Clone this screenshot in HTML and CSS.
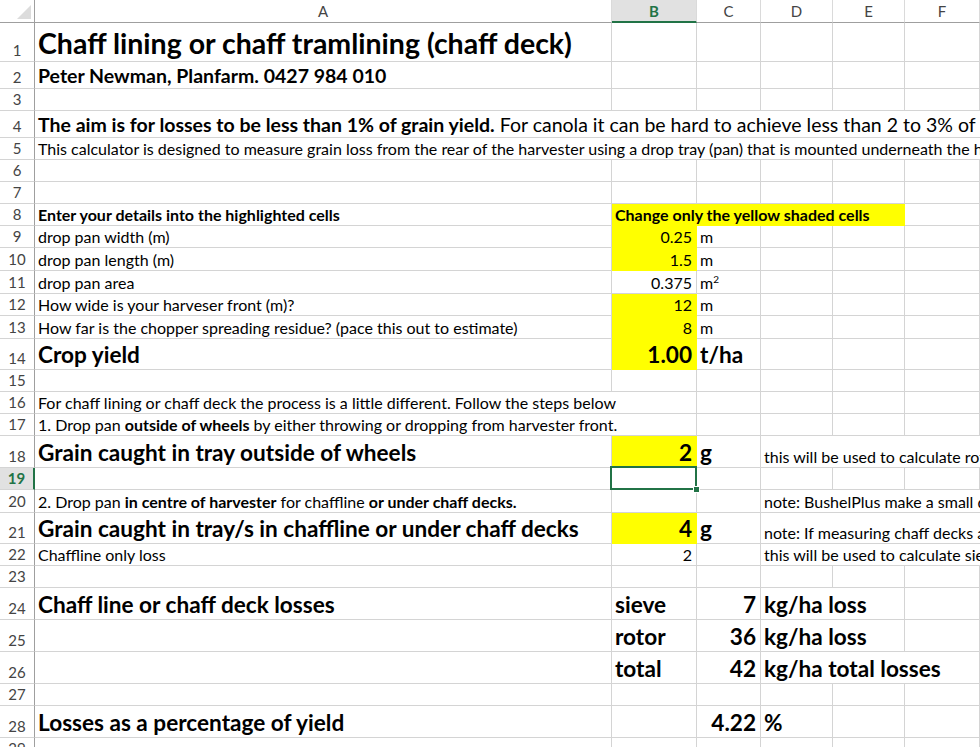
FILE: index.html
```html
<!DOCTYPE html>
<html lang="en">
<head>
  <meta charset="UTF-8" />
  <title>Chaff deck losses</title>
  <link rel="stylesheet" href="styles.css">
</head>
<body>
<div class="sheet">

  <div class="row head">
    <div class="corner">
      <svg width="34" height="22" viewBox="0 0 34 22"><polygon points="31,5 31,19 17,19" fill="#dcdcdc"/></svg>
    </div>
    <div class="col">A</div>
    <div class="col on">B</div>
    <div class="col">C</div>
    <div class="col">D</div>
    <div class="col">E</div>
    <div class="col">F</div>
    <div class="col">G</div>
  </div>

  <div class="row h39">
    <div class="rn">1</div>
    <div class="cell title">Chaff lining or chaff tramlining (chaff deck)</div>
    <div class="cell"></div><div class="cell"></div><div class="cell"></div><div class="cell"></div><div class="cell"></div><div class="cell"></div>
  </div>

  <div class="row h27">
    <div class="rn">2</div>
    <div class="cell sub">Peter Newman, Planfarm. 0427 984 010</div>
    <div class="cell"></div><div class="cell"></div><div class="cell"></div><div class="cell"></div><div class="cell"></div><div class="cell"></div>
  </div>

  <div class="row">
    <div class="rn">3</div>
    <div class="cell"></div><div class="cell"></div><div class="cell"></div><div class="cell"></div><div class="cell"></div><div class="cell"></div><div class="cell"></div>
  </div>

  <div class="row h27">
    <div class="rn">4</div>
    <div class="cell s7 mid"><span><b>The aim is for losses to be less than 1% of grain yield.</b> For canola it can be hard to achieve less than 2 to 3% of grain yield.</span></div>
  </div>

  <div class="row">
    <div class="rn">5</div>
    <div class="cell s7">This calculator is designed to measure grain loss from the rear of the harvester using a drop tray (pan) that is mounted underneath the harvester.</div>
  </div>

  <div class="row">
    <div class="rn">6</div>
    <div class="cell"></div><div class="cell"></div><div class="cell"></div><div class="cell"></div><div class="cell"></div><div class="cell"></div><div class="cell"></div>
  </div>

  <div class="row">
    <div class="rn">7</div>
    <div class="cell"></div><div class="cell"></div><div class="cell"></div><div class="cell"></div><div class="cell"></div><div class="cell"></div><div class="cell"></div>
  </div>

  <div class="row">
    <div class="rn">8</div>
    <div class="cell bold">Enter your details into the highlighted cells</div>
    <div class="cell s4 y bold">Change only the yellow shaded cells</div>
    <div class="cell"></div><div class="cell"></div>
  </div>

  <div class="row">
    <div class="rn">9</div>
    <div class="cell">drop pan width (m)</div>
    <div class="cell y num">0.25</div>
    <div class="cell">m</div>
    <div class="cell"></div><div class="cell"></div><div class="cell"></div><div class="cell"></div>
  </div>

  <div class="row h23">
    <div class="rn">10</div>
    <div class="cell">drop pan length (m)</div>
    <div class="cell y num">1.5</div>
    <div class="cell">m</div>
    <div class="cell"></div><div class="cell"></div><div class="cell"></div><div class="cell"></div>
  </div>

  <div class="row h23">
    <div class="rn">11</div>
    <div class="cell">drop pan area</div>
    <div class="cell num">0.375</div>
    <div class="cell"><span>m<sup>2</sup></span></div>
    <div class="cell"></div><div class="cell"></div><div class="cell"></div><div class="cell"></div>
  </div>

  <div class="row">
    <div class="rn">12</div>
    <div class="cell">How wide is your harveser front (m)?</div>
    <div class="cell y num">12</div>
    <div class="cell">m</div>
    <div class="cell"></div><div class="cell"></div><div class="cell"></div><div class="cell"></div>
  </div>

  <div class="row h23">
    <div class="rn">13</div>
    <div class="cell">How far is the chopper spreading residue? (pace this out to estimate)</div>
    <div class="cell y num">8</div>
    <div class="cell">m</div>
    <div class="cell"></div><div class="cell"></div><div class="cell"></div><div class="cell"></div>
  </div>

  <div class="row h31">
    <div class="rn">14</div>
    <div class="cell big">Crop yield</div>
    <div class="cell y num big">1.00</div>
    <div class="cell big">t/ha</div>
    <div class="cell"></div><div class="cell"></div><div class="cell"></div><div class="cell"></div>
  </div>

  <div class="row">
    <div class="rn">15</div>
    <div class="cell"></div><div class="cell"></div><div class="cell"></div><div class="cell"></div><div class="cell"></div><div class="cell"></div><div class="cell"></div>
  </div>

  <div class="row">
    <div class="rn">16</div>
    <div class="cell s2">For chaff lining or chaff deck the process is a little different. Follow the steps below</div>
    <div class="cell"></div><div class="cell"></div><div class="cell"></div><div class="cell"></div><div class="cell"></div>
  </div>

  <div class="row">
    <div class="rn">17</div>
    <div class="cell s2"><span>1. Drop pan <b>outside of wheels</b> by either throwing or dropping from harvester front.</span></div>
    <div class="cell"></div><div class="cell"></div><div class="cell"></div><div class="cell"></div><div class="cell"></div>
  </div>

  <div class="row h32">
    <div class="rn">18</div>
    <div class="cell big">Grain caught in tray outside of wheels</div>
    <div class="cell y num big">2</div>
    <div class="cell big">g</div>
    <div class="cell s4">this will be used to calculate rotor losses</div>
  </div>

  <div class="row">
    <div class="rn on">19</div>
    <div class="cell"></div>
    <div class="cell sel"></div>
    <div class="cell"></div><div class="cell"></div><div class="cell"></div><div class="cell"></div><div class="cell"></div>
  </div>

  <div class="row h23">
    <div class="rn">20</div>
    <div class="cell"><span>2. Drop pan <b>in centre of harvester</b> for chaffline <b>or under chaff decks.</b></span></div>
    <div class="cell"></div>
    <div class="cell"></div>
    <div class="cell s4">note: BushelPlus make a small drop pan</div>
  </div>

  <div class="row h31">
    <div class="rn">21</div>
    <div class="cell big">Grain caught in tray/s in chaffline or under chaff decks</div>
    <div class="cell y num big">4</div>
    <div class="cell big">g</div>
    <div class="cell s4">note: If measuring chaff decks also</div>
  </div>

  <div class="row">
    <div class="rn">22</div>
    <div class="cell">Chaffline only loss</div>
    <div class="cell num">2</div>
    <div class="cell"></div>
    <div class="cell s4">this will be used to calculate sieve losses</div>
  </div>

  <div class="row">
    <div class="rn">23</div>
    <div class="cell"></div><div class="cell"></div><div class="cell"></div><div class="cell"></div><div class="cell"></div><div class="cell"></div><div class="cell"></div>
  </div>

  <div class="row h32">
    <div class="rn">24</div>
    <div class="cell big">Chaff line or chaff deck losses</div>
    <div class="cell big">sieve</div>
    <div class="cell num big">7</div>
    <div class="cell s2 big">kg/ha loss</div>
    <div class="cell"></div><div class="cell"></div>
  </div>

  <div class="row h32">
    <div class="rn">25</div>
    <div class="cell"></div>
    <div class="cell big">rotor</div>
    <div class="cell num big">36</div>
    <div class="cell s2 big">kg/ha loss</div>
    <div class="cell"></div><div class="cell"></div>
  </div>

  <div class="row h32">
    <div class="rn">26</div>
    <div class="cell"></div>
    <div class="cell big">total</div>
    <div class="cell num big">42</div>
    <div class="cell s3 big">kg/ha total losses</div>
    <div class="cell"></div>
  </div>

  <div class="row">
    <div class="rn">27</div>
    <div class="cell"></div><div class="cell"></div><div class="cell"></div><div class="cell"></div><div class="cell"></div><div class="cell"></div><div class="cell"></div>
  </div>

  <div class="row h32">
    <div class="rn">28</div>
    <div class="cell big">Losses as a percentage of yield</div>
    <div class="cell"></div>
    <div class="cell num big">4.22</div>
    <div class="cell big">%</div>
    <div class="cell"></div><div class="cell"></div><div class="cell"></div>
  </div>

  <div class="row">
    <div class="rn">29</div>
    <div class="cell"></div><div class="cell"></div><div class="cell"></div><div class="cell"></div><div class="cell"></div><div class="cell"></div><div class="cell"></div>
  </div>

</div>
</body>
</html>
```

FILE: styles.css
```css
html, body {
  margin: 0;
  overflow: hidden;
  background-color: #fff;
}
body {
  font-family: Lato, "Liberation Sans", sans-serif;
  font-size: 16px;
  color: #000;
}
.sheet {
  width: 1060px;
}

/* every row shares the same column widths */
.row {
  display: grid;
  grid-template-columns: 35px 577px 85px 64px 72px 72px 75px 80px;
  height: 22px;
}
.h23 { height: 23px; }
.h27 { height: 27px; }
.h31 { height: 31px; }
.h32 { height: 32px; }
.h39 { height: 39px; }

.cell, .rn, .col, .corner {
  box-sizing: border-box;
  white-space: nowrap;
  overflow: hidden;
}
.cell {
  display: flex;
  align-items: flex-end;
  padding: 0 4px 1px 3px;
  line-height: 1.2;
  border-right: 1px solid #d4d4d4;
  border-bottom: 1px solid #d4d4d4;
}
.s2 { grid-column: span 2; }
.s3 { grid-column: span 3; }
.s4 { grid-column: span 4; }
.s7 { grid-column: span 7; }

.num { justify-content: flex-end; }
.bold { font-weight: bold; }
.title { font-size: 28.5px; font-weight: bold; padding-bottom: 1px; }
.sub { font-size: 19.5px; font-weight: bold; }
.mid { font-size: 19.5px; }
.big { font-size: 22.6px; font-weight: bold; }
.y {
  background-color: #ff0;
  border-color: #ff0;
}
sup {
  font-size: 10px;
  vertical-align: 6px;
  line-height: 0;
}

/* headers */
.head { height: 23px; }
.corner {
  border-right: 1px solid #9f9f9f;
  border-bottom: 1px solid #9f9f9f;
}
.corner svg { display: block; }
.col {
  display: flex;
  align-items: center;
  justify-content: center;
  font-size: 15px;
  color: #444;
  border-right: 1px solid #dadada;
  border-bottom: 1px solid #9f9f9f;
}
.col.on {
  background-color: #e1e1e1;
  color: #217346;
  font-weight: bold;
  border-bottom: 2px solid #217346;
}
.rn {
  display: flex;
  align-items: flex-end;
  justify-content: center;
  padding-bottom: 2px;
  line-height: 1.2;
  font-size: 15px;
  color: #444;
  border-right: 1px solid #9f9f9f;
  border-bottom: 1px solid #d4d4d4;
}
.rn.on {
  background-color: #e1e1e1;
  color: #217346;
  font-weight: bold;
  border-right: 2px solid #217346;
}

/* active cell outline and fill handle */
.sel {
  position: relative;
  overflow: visible;
}
.sel::before {
  content: "";
  position: absolute;
  left: -2px;
  top: -2px;
  right: -1px;
  bottom: -1px;
  border: 2px solid #217346;
}
.sel::after {
  content: "";
  position: absolute;
  right: -4px;
  bottom: -4px;
  width: 5px;
  height: 5px;
  background-color: #217346;
  border: 1px solid #fff;
}
```
